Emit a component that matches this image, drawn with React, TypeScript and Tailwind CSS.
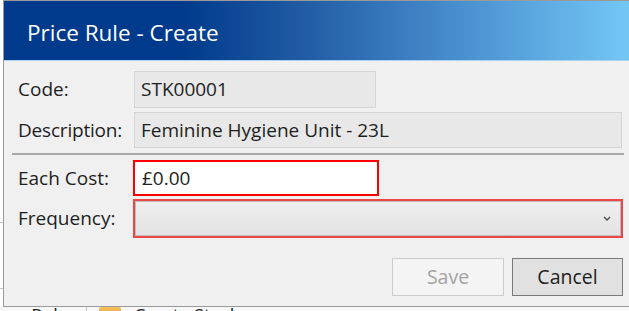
import React from "react";

const font = { fontFamily: '"Open Sans", "Noto Sans", "Liberation Sans", sans-serif' };

export default function App() {
  return (
    <div className="relative w-[629px] h-[311px] overflow-hidden bg-white" style={font}>
      {/* background app: left strip lines */}
      <div className="absolute left-0 top-[222px] w-[4px] h-px bg-[#c8c8c8]" />
      <div className="absolute left-0 top-[288px] w-[4px] h-px bg-[#c8c8c8]" />
      {/* background app: bottom toolbar text */}
      <div className="absolute left-0 top-[306px] w-[629px] h-[20px] bg-[#f7f7f7] flex items-start text-[18px] text-[#222] leading-none">
        <span className="ml-[22px] mt-[0px]">ı Rule</span>
        <div className="ml-[18px] w-px h-[14px] bg-[#c8c8c8]" />
        <div className="ml-[12px] mt-[1px] w-[22px] h-[16px] rounded-[2px] bg-gradient-to-b from-[#f5c05a] to-[#e0902a]" />
        <span className="ml-[13px] mt-[0px]">Create Stock</span>
      </div>

      {/* dialog window */}
      <div className="absolute left-[3px] top-0 w-[640px] h-[307px] border border-[#9a9a9a] bg-[#f0f0f0] flex flex-col">
        {/* title bar */}
        <div className="h-[60px] shrink-0 flex items-center pl-[23px] bg-[linear-gradient(to_right,#003a8c_0%,#003a8c_28%,#1f5aa3_46%,#4a90d0_72%,#73c7f5_98%)] border-b border-[#a9d3f0]">
          <span className="text-white text-[22.5px] mt-[4px]">Price Rule - Create</span>
        </div>

        <div className="flex flex-col pl-[14px] pr-[19px] text-[19px] text-[#1e1e1e]">
          {/* Code */}
          <div className="flex items-center mt-[10px] h-[37px]">
            <span className="w-[116px] shrink-0">Code:</span>
            <div className="w-[242px] h-full flex items-center pl-[6px] bg-[#e8e8e8] border border-[#d5d5d5]">STK00001</div>
          </div>
          {/* Description */}
          <div className="flex items-center mt-[4px] h-[36px]">
            <span className="w-[116px] shrink-0 tracking-[-0.2px]">Description:</span>
            <div className="w-[488px] h-full flex items-center pl-[6px] bg-[#e8e8e8] border border-[#d5d5d5]">Feminine Hygiene Unit - 23L</div>
          </div>
          {/* separator */}
          <div className="ml-[-6px] mt-[5px] h-[2px] w-[612px] bg-[#a8a8a8]" />
          {/* Each cost */}
          <div className="flex items-center mt-[5px] h-[36px]">
            <span className="w-[115px] shrink-0">Each Cost:</span>
            <div className="w-[246px] h-full flex items-center pl-[7px] bg-white border-2 border-[#ff0000]">£0.00</div>
          </div>
          {/* Frequency */}
          <div className="flex items-center mt-[3px] h-[39px]">
            <span className="w-[115px] shrink-0">Frequency:</span>
            <div className="w-[490px] h-full border-2 border-[#ee4545]">
              <div className="h-full border border-[#bdbdbd] bg-gradient-to-b from-[#efefef] to-[#e3e3e3] flex items-center justify-end pr-[9px]">
                <svg width="8" height="5" viewBox="0 0 8 5">
                  <path d="M1 1 L4 4 L7 1" stroke="#555" strokeWidth="1.5" fill="none" />
                </svg>
              </div>
            </div>
          </div>
          {/* buttons */}
          <div className="flex justify-end mt-[20px] h-[38px] gap-[8px] w-[605px]">
            <div className="w-[112px] h-full flex items-center justify-center bg-[#f4f4f4] border border-[#cccccc] text-[#a3a3a3] text-[19.5px]">Save</div>
            <div className="w-[111px] h-full flex items-center justify-center bg-[#e1e1e1] border border-[#7a7a7a] text-[#1e1e1e] text-[19.5px]">Cancel</div>
          </div>
        </div>
      </div>
    </div>
  );
}
